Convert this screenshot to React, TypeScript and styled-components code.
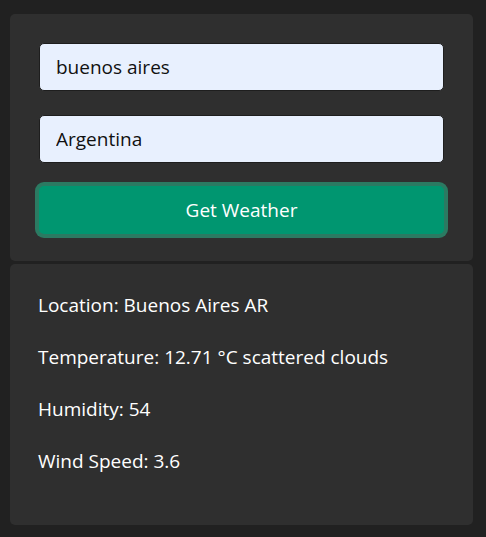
import React, { useState } from 'react'
import styled, { createGlobalStyle } from 'styled-components'

const GlobalStyle = createGlobalStyle`
  html, body {
    margin: 0;
    padding: 0;
    background: #212121;
  }
  body {
    font-family: 'Open Sans', 'Noto Sans', sans-serif;
  }
`

const PageWrapper = styled.div`
  display: flex;
  flex-direction: column;
  gap: 3px;
  width: 463px;
  padding: 14px 0 0 10px;
`

const Card = styled.div`
  background: #2f2f2f;
  border-radius: 5px;
`

const FormCard = styled(Card)`
  display: flex;
  flex-direction: column;
  gap: 24px;
  padding: 29px 29px 27px 29px;
`

const Input = styled.input`
  box-sizing: border-box;
  width: 100%;
  height: 48px;
  padding: 0 16px;
  border: 1px solid #1e1e1e;
  border-radius: 5px;
  background: #e8f0fe;
  color: #111;
  font-family: 'Open Sans', 'Noto Sans', sans-serif;
  font-size: 19px;
  outline: none;
`

const Button = styled.button`
  box-sizing: border-box;
  height: 48px;
  width: 100%;
  margin-top: -1px;
  border: none;
  border-radius: 5px;
  background: #009670;
  color: #fff;
  font-family: 'Open Sans', 'Noto Sans', sans-serif;
  font-size: 19px;
  box-shadow: 0 0 0 4px #2b7a62;
  cursor: pointer;
`

const ResultCard = styled(Card)`
  display: flex;
  flex-direction: column;
  gap: 25px;
  padding: 28px 28px 50px 28px;
`

const Line = styled.p`
  margin: 0;
  color: #fff;
  font-size: 19px;
  line-height: 27px;
`

export default function App() {
  const [city, setCity] = useState('buenos aires')
  const [country, setCountry] = useState('Argentina')

  const weather = {
    name: 'Buenos Aires',
    country: 'AR',
    temp: 12.71,
    description: 'scattered clouds',
    humidity: 54,
    wind: 3.6
  }

  return (
    <>
      <GlobalStyle />
      <PageWrapper>
        <FormCard>
          <Input value={city} onChange={e => setCity(e.target.value)} />
          <Input value={country} onChange={e => setCountry(e.target.value)} />
          <Button>Get Weather</Button>
        </FormCard>
        <ResultCard>
          <Line>
            Location: {weather.name} {weather.country}
          </Line>
          <Line>
            Temperature: {weather.temp} °C {weather.description}
          </Line>
          <Line>Humidity: {weather.humidity}</Line>
          <Line>Wind Speed: {weather.wind}</Line>
        </ResultCard>
      </PageWrapper>
    </>
  )
}
